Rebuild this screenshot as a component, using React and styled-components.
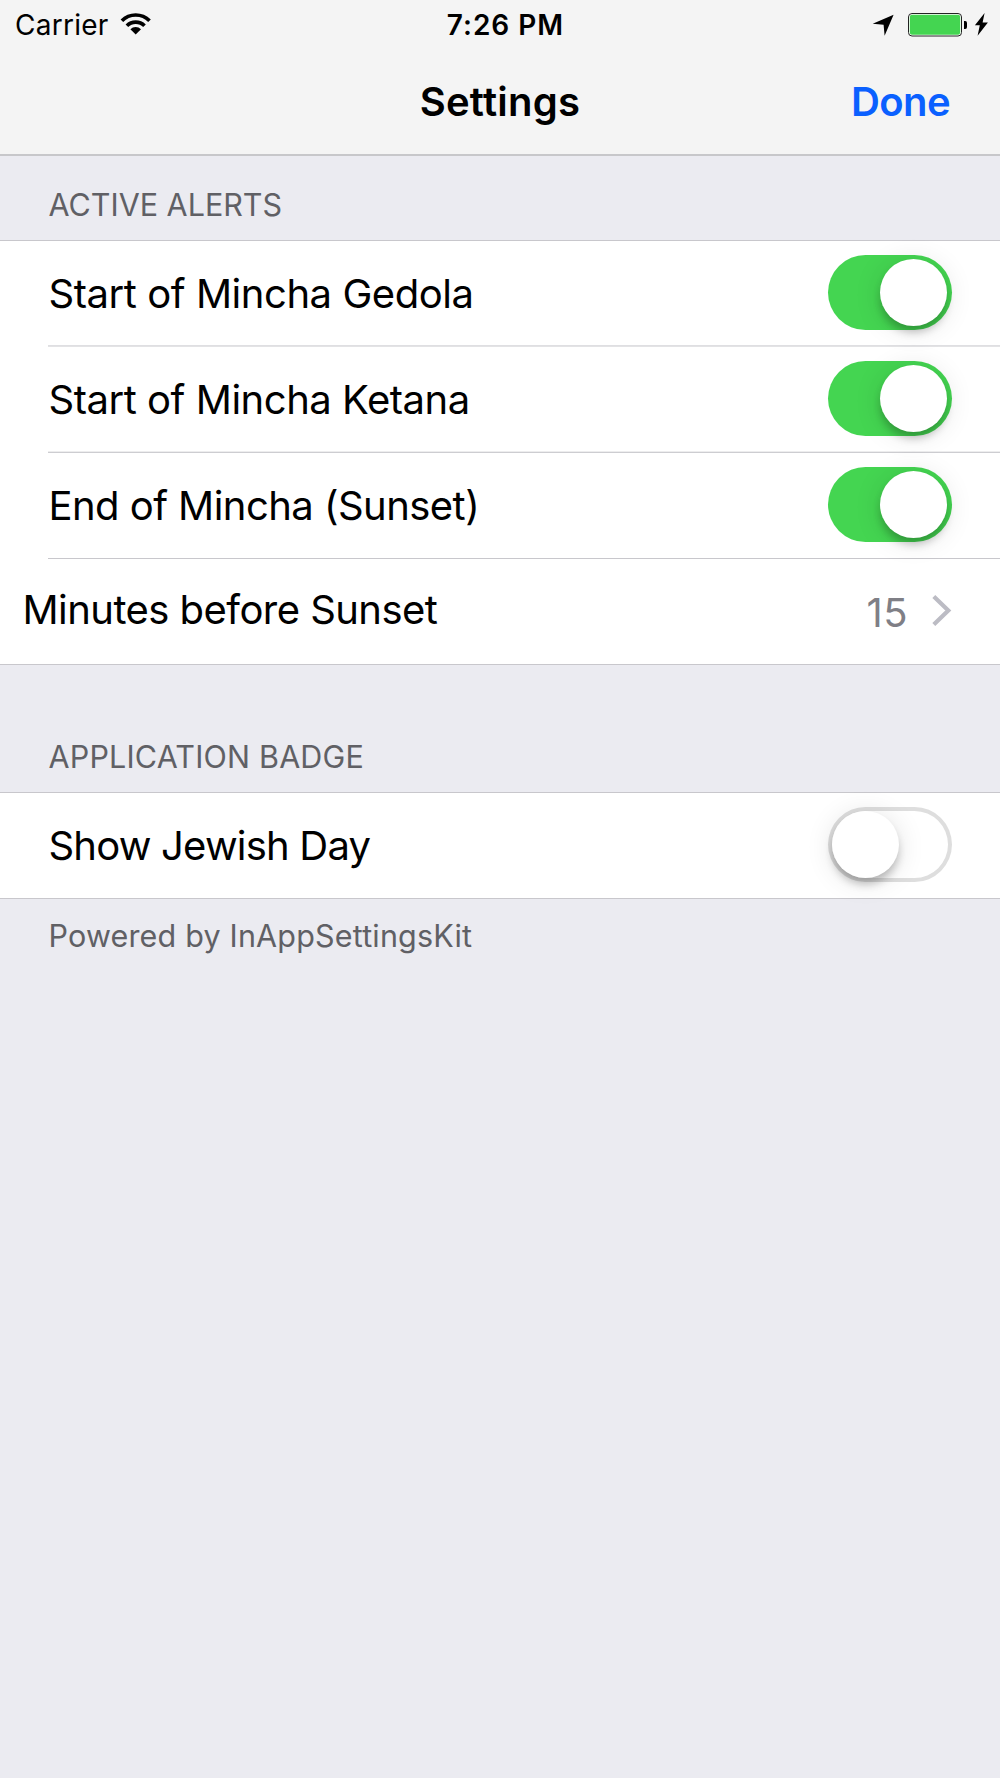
import React, { useState } from "react";
import styled, { createGlobalStyle } from "styled-components";

const GlobalStyle = createGlobalStyle`
  body {
    margin: 0;
    background-color: #ebebf1;
    font-family: Inter, "Liberation Sans", sans-serif;
    color: #000;
  }
`;

const Screen = styled.div`
  width: 1000px;
  min-height: 1778px;
  background-color: #ebebf1;
`;

const NavBar = styled.header`
  background-color: #f4f4f4;
  border-bottom: 2px solid #c7c7ca;
`;

const StatusBar = styled.div`
  display: grid;
  grid-template-columns: 1fr auto 1fr;
  height: 50px;
  line-height: 51px;
  font-size: 28px;
`;

const CarrierGroup = styled.div`
  display: flex;
  padding-left: 15px;
  letter-spacing: 0.25px;
`;

const WifiIcon = styled.svg`
  margin: 11px 0 0 11px;
`;

const Clock = styled.div`
  font-weight: 600;
  letter-spacing: 1px;
  padding-left: 11px;
`;

const PowerIcons = styled.svg`
  justify-self: end;
  margin: 8px 10px 0 0;
`;

const TitleBar = styled.div`
  display: grid;
  grid-template-columns: 1fr auto 1fr;
  height: 104px;
  line-height: 103px;
  font-size: 40px;
`;

const Title = styled.h1`
  grid-column: 2;
  margin: 0;
  font-size: inherit;
  font-weight: 600;
  letter-spacing: 0.25px;
`;

const DoneButton = styled.button`
  align-self: start;
  justify-self: end;
  height: 103px;
  margin-right: 50px;
  padding: 0;
  border: 0;
  background: none;
  font: inherit;
  font-weight: 600;
  letter-spacing: -0.6px;
  color: #0a60ff;
`;

const SectionHeader = styled.h2`
  display: flex;
  align-items: flex-end;
  box-sizing: border-box;
  height: ${(props) => props.height}px;
  margin: 0;
  padding: 0 48.5px 15.5px;
  font-size: 30.5px;
  font-weight: 400;
  line-height: 40px;
  letter-spacing: ${(props) => props.spacing || 0}px;
  color: #606065;
`;

const List = styled.div`
  border-top: 1px solid #c8c7cc;
  border-bottom: 1px solid #c8c7cc;
  background-color: #fff;
`;

const Row = styled.div`
  display: flex;
  justify-content: space-between;
  box-sizing: border-box;
  height: ${(props) => (props.divider ? 106 : 105)}px;
  margin-left: ${(props) => (props.flush ? 0 : 48)}px;
  padding: 0 48px 0 ${(props) => (props.flush ? 22.5 : 0.5)}px;
  ${(props) =>
    props.divider &&
    `
    background-image: linear-gradient(
      ${props.divider[0]} 1px,
      ${props.divider[1]} 1px
    );
    background-size: 100% 2px;
    background-position: bottom;
    background-repeat: no-repeat;
  `}
`;

const Label = styled.span`
  font-size: 40px;
  line-height: ${(props) => props.line || 105}px;
  letter-spacing: ${(props) => props.spacing || 0}px;
  white-space: nowrap;
`;

const Detail = styled.span`
  display: flex;
  font-size: 40px;
  line-height: 107px;
  letter-spacing: 0.4px;
  color: #7f7f86;
`;

const Chevron = styled.svg`
  margin: 34px 0 0 22px;
`;

const Track = styled.button`
  display: flex;
  flex-shrink: 0;
  justify-content: ${(props) => (props.on ? "flex-end" : "flex-start")};
  box-sizing: border-box;
  width: 124px;
  height: 75px;
  margin-top: ${(props) => props.top}px;
  padding: 4px 5px 4px 4px;
  border: 0;
  border-radius: 38px;
  background-color: ${(props) => (props.on ? "#44d551" : "#fff")};
  box-shadow: ${(props) => (props.on ? "none" : "inset 0 0 0 4px #dedede")};
`;

const Knob = styled.span`
  width: 67px;
  height: 67px;
  border-radius: 50%;
  background-color: #fff;
  box-shadow: 0 7px 9px -1px rgba(0, 0, 0, 0.24), 0 3px 28px rgba(0, 0, 0, 0.12);
`;

const Footer = styled.p`
  margin: 0;
  padding: 17px 48.5px;
  font-size: 30.5px;
  line-height: 40px;
  letter-spacing: 0.18px;
  color: #606065;
`;

const Switch = ({ initial, top = 14 }) => {
  const [on, setOn] = useState(initial);
  return (
    <Track
      role="switch"
      aria-checked={on}
      on={on ? 1 : 0}
      top={top}
      onClick={() => setOn(!on)}
    >
      <Knob />
    </Track>
  );
};

const alerts = [
  {
    label: "Start of Mincha Gedola",
    spacing: -0.45,
    divider: ["#dfdfe2", "#e3e3e5"],
    top: 13.5,
  },
  {
    label: "Start of Mincha Ketana",
    spacing: -0.47,
    divider: ["#ededee", "#cdcdd1"],
  },
  {
    label: "End of Mincha (Sunset)",
    spacing: -0.55,
    divider: ["#ffffff", "#c8c7cc"],
  },
];

export default function App() {
  return (
    <Screen>
      <GlobalStyle />
      <NavBar>
        <StatusBar>
          <CarrierGroup>
            Carrier
            <WifiIcon width="32" height="26" viewBox="120 11 32 26">
              <g fill="none" stroke="#000" strokeWidth="3.7">
                <path d="M121.9 20.7a19.5 19.5 0 0 1 27.6 0" />
                <path d="M126.9 25.7a12.4 12.4 0 0 1 17.6 0" />
              </g>
              <path d="M130.4 29.2a7.5 7.5 0 0 1 10.6 0l-5.3 5.3z" />
            </WifiIcon>
          </CarrierGroup>
          <Clock>7:26 PM</Clock>
          <PowerIcons width="120" height="32" viewBox="870 8 120 32">
            <path d="M872.7 23.7L893.6 14.7L884.6 35.8L883.6 24.7Z" />
            <rect
              x="908.5"
              y="13.5"
              width="53"
              height="22.5"
              rx="3.5"
              fill="#fff"
              stroke="#222"
            />
            <rect
              x="909.8"
              y="14.8"
              width="50.4"
              height="20"
              rx="2.2"
              fill="#44d551"
            />
            <path d="M964 21h1.2a1.8 2 0 0 1 1.8 2v4a1.8 2 0 0 1-1.8 2H964z" />
            <path d="M984.6 13L974.9 25.2H979.8L977.6 35.8L987.9 22.6H982.6Z" />
          </PowerIcons>
        </StatusBar>
        <TitleBar>
          <Title>Settings</Title>
          <DoneButton>Done</DoneButton>
        </TitleBar>
      </NavBar>

      <SectionHeader height={84}>ACTIVE ALERTS</SectionHeader>
      <List>
        {alerts.map((alert) => (
          <Row key={alert.label} divider={alert.divider}>
            <Label spacing={alert.spacing}>{alert.label}</Label>
            <Switch initial={true} top={alert.top} />
          </Row>
        ))}
        <Row flush={1}>
          <Label spacing={-0.55} line={101}>
            Minutes before Sunset
          </Label>
          <Detail>
            15
            <Chevron width="22" height="36" viewBox="0 0 22 36" fill="none">
              <path
                d="M3.8 3.5L18.3 17.5L3.8 31.5"
                stroke="#bcbcc4"
                strokeWidth="4.2"
              />
            </Chevron>
          </Detail>
        </Row>
      </List>

      <SectionHeader height={127} spacing={0.18}>
        APPLICATION BADGE
      </SectionHeader>
      <List>
        <Row>
          <Label spacing={-0.8}>Show Jewish Day</Label>
          <Switch initial={false} />
        </Row>
      </List>
      <Footer>Powered by InAppSettingsKit</Footer>
    </Screen>
  );
}
